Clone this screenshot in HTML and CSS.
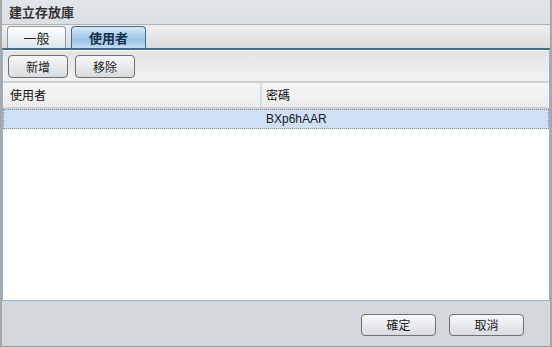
FILE: index.html
```html
<!DOCTYPE html>
<html lang="zh-Hant">
  <head>
    <meta charset="UTF-8" />
    <title>建立存放庫</title>
    <link rel="stylesheet" href="styles.css">
  </head>
  <body>
    <div class="window">
      <!-- Заголовок окна -->
      <div class="title">建立存放庫</div>

      <!-- Вкладки -->
      <div class="tabs">
        <div class="tab">一般</div>
        <div class="tab active">使用者</div>
      </div>

      <div class="panel">
        <div class="toolbar">
          <button class="btn">新增</button>
          <button class="btn">移除</button>
        </div>

        <div class="grid">
          <div class="grid-head">
            <div class="cell col-user">使用者</div>
            <div class="cell col-pass">密碼</div>
          </div>
          <div class="grid-row selected">
            <div class="cell col-user"></div>
            <div class="cell col-pass">BXp6hAAR</div>
          </div>
        </div>
      </div>

      <div class="footer">
        <button class="btn wide">確定</button>
        <button class="btn wide">取消</button>
      </div>
    </div>
  </body>
</html>
```

FILE: styles.css
```css
* {
  margin: 0;
  padding: 0;
  box-sizing: border-box;
}

body {
  font-family: "Noto Sans CJK TC", "Liberation Sans", sans-serif;
  font-size: 12px;
  color: #222;
  background: #fff;
}

.window {
  width: 552px;
  height: 347px;
  display: flex;
  flex-direction: column;
  border-left: 2px solid #a8a8a8;
  border-right: 2px solid #a8a8a8;
  border-bottom: 1px solid #9a9a9a;
  background: #d3d8dc;
}

.title {
  height: 25px;
  line-height: 24px;
  padding-left: 7px;
  font-size: 13px;
  font-weight: bold;
  color: #333;
  background: linear-gradient(#e2e6ea, #dadfe3);
  border-bottom: 1px solid #b2b2b2;
}

/* Вкладки */
.tabs {
  height: 25px;
  display: flex;
  align-items: flex-end;
  gap: 5px;
  padding-left: 5px;
  background: linear-gradient(#efefef, #dcdcdc);
  border-bottom: 2px solid #3f6d8f;
}

.tab {
  height: 22px;
  line-height: 21px;
  text-align: center;
  width: 59px;
  font-size: 13px;
  color: #222;
  border: 1px solid #8a9aa8;
  border-bottom: none;
  border-radius: 4px 4px 0 0;
  background: linear-gradient(#ffffff, #dde7ee);
}

.tab.active {
  width: 75px;
  font-weight: bold;
  color: #10304c;
  border-color: #3f6d8f;
  background: linear-gradient(#d7e8f7, #9cc4e6 60%, #c4dcf1);
}

/* Содержимое вкладки */
.panel {
  flex: 1;
  display: flex;
  flex-direction: column;
  border-top: 1px solid #ffffff;
  border-left: 1px solid #8fb6d6;
  border-right: 1px solid #8fb6d6;
  border-bottom: 1px solid #8fb6d6;
}

.toolbar {
  height: 32px;
  display: flex;
  align-items: center;
  gap: 7px;
  padding-left: 5px;
  background: linear-gradient(#e4e4e4, #f1f1f1);
  border-bottom: 2px solid #cfcfcf;
}

.btn {
  width: 60px;
  height: 23px;
  font-family: inherit;
  font-size: 12px;
  color: #222;
  border: 1px solid #707070;
  border-radius: 4px;
  background: linear-gradient(#f8f8f8, #e6e9eb 55%, #d9dcdf);
  cursor: pointer;
}

.btn.wide {
  width: 75px;
  height: 22px;
}

/* Таблица */
.grid {
  flex: 1;
  background: #fff;
}

.grid-head,
.grid-row {
  display: flex;
}

.grid-head {
  height: 26px;
  background: linear-gradient(#f6f6f6, #ececec);
  border-bottom: 2px solid #d0d0d0;
}

.grid-head .cell {
  line-height: 24px;
  color: #111;
}

.cell {
  padding-left: 4px;
}

.grid-head .col-user {
  padding-left: 7px;
}

.col-user {
  width: 259px;
  border-right: 2px solid #dcdcdc;
}

.col-pass {
  flex: 1;
}

.grid-row {
  height: 20px;
  line-height: 18px;
}

.grid-row .col-user {
  width: 259px;
  border-right: none;
}

.grid-row.selected {
  background: #cde0f4;
  border: 1px dotted #8a8a8a;
}

.grid-row .col-pass {
  font-family: "Liberation Sans", sans-serif;
  font-size: 12px;
  padding-left: 3px;
  color: #1a1a1a;
}

/* Нижняя панель с кнопками */
.footer {
  height: 45px;
  display: flex;
  justify-content: flex-end;
  align-items: center;
  gap: 13px;
  padding-right: 26px;
  padding-top: 2px;
}
```
